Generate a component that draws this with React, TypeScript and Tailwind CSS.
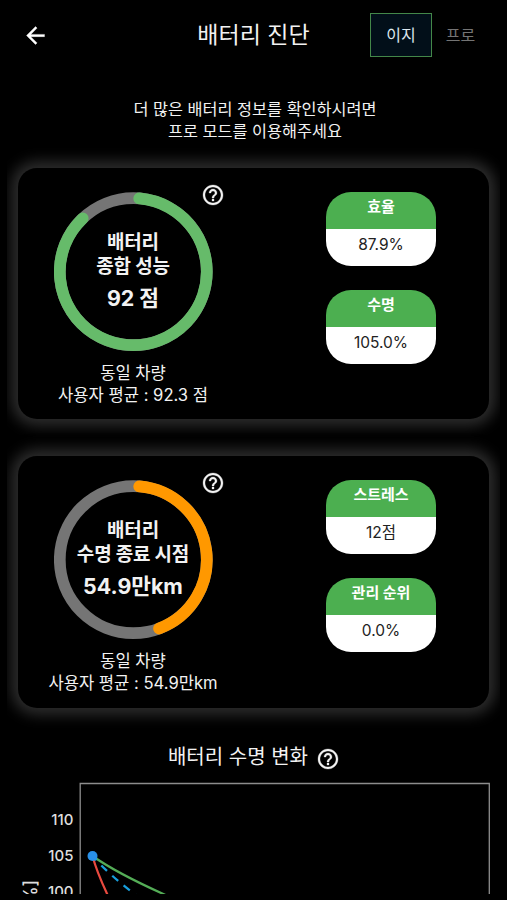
import React from 'react';

const FONT = "font-['Inter','Noto_Sans_CJK_KR',sans-serif]";

function HelpIcon() {
  return (
    <svg width="24" height="24" viewBox="0 0 24 24" className="block shrink-0 fill-[#f2f2f2] stroke-[#f2f2f2] stroke-[0.3]">
      <path d="M11 18h2v-2h-2v2zm1-16C6.48 2 2 6.48 2 12s4.48 10 10 10 10-4.48 10-10S17.52 2 12 2zm0 18c-4.41 0-8-3.59-8-8s3.59-8 8-8 8 3.59 8 8-3.59 8-8 8zm0-14c-2.21 0-4 1.79-4 4h2c0-1.1.9-2 2-2s2 .9 2 2c0 2-3 1.75-3 5h2c0-2.25 3-2.5 3-5 0-2.21-1.79-4-4-4z" />
    </svg>
  );
}

const RADIUS = 73.5;

function arcPath(from: number, to: number) {
  const point = (deg: number) => {
    const a = (deg * Math.PI) / 180;
    return `${79.3 + RADIUS * Math.sin(a)} ${79.7 - RADIUS * Math.cos(a)}`;
  };
  return `M${point(from)}A${RADIUS} ${RADIUS} 0 ${to - from > 180 ? 1 : 0} 1 ${point(to)}`;
}

interface GaugeProps {
  color: string;
  end: number;
  title: string;
  value: string;
}

function Gauge({ color, end, title, value }: GaugeProps) {
  return (
    <div className="grid h-40 w-40 place-items-center">
      <svg width="160" height="160" viewBox="0 0 160 160" className="col-start-1 row-start-1 fill-none">
        <circle cx="79.3" cy="79.7" r={RADIUS} stroke="#757575" strokeWidth="11.7" />
        <path d={arcPath(4.6, end)} stroke={color} strokeWidth="11.7" strokeLinecap="round" />
      </svg>
      <div className="col-start-1 row-start-1 mr-0.5 flex flex-col items-center whitespace-nowrap font-bold">
        <span className="text-[19px] leading-6 tracking-[-0.2px]">배터리</span>
        <span className="text-[19px] leading-6 tracking-[-0.2px]">{title}</span>
        <span className="mt-[3px] text-[21.4px] leading-8">{value}</span>
      </div>
    </div>
  );
}

function Pill({ label, value }: { label: string; value: string }) {
  return (
    <div className="flex h-[74px] w-[110px] flex-col overflow-hidden rounded-[25px] text-center">
      <div className="h-[37px] bg-[#4caf50] pt-[3px] text-[15px] leading-6 font-bold text-white">{label}</div>
      <div className="flex-1 bg-white pt-1 text-[15.5px] leading-6 text-[#222]">{value}</div>
    </div>
  );
}

interface CardProps extends GaugeProps {
  average: string;
  pills: [string, string][];
}

function Card({ average, pills, ...gauge }: CardProps) {
  return (
    <section className="relative flex h-[251.3px] rounded-[19px] bg-black pt-6 shadow-[0_0_14px_7px_#2c2c2c]">
      <div className="flex w-[232px] flex-col items-center">
        <Gauge {...gauge} />
        <p className="mt-[10px] mr-0.5 text-center text-[16.6px] leading-[22px] whitespace-nowrap">
          동일 차량
          <br />
          사용자 평균 : {average}
        </p>
      </div>
      <div className="-mt-[9px] -ml-[49px]">
        <HelpIcon />
      </div>
      <div className="ml-[101px] flex flex-col gap-6">
        {pills.map(([label, value]) => (
          <Pill key={label} label={label} value={value} />
        ))}
      </div>
    </section>
  );
}

function LifeChart() {
  return (
    <svg width="507" height="116" viewBox="0 778 507 116" className="mt-[5px] block fill-none">
      <path d="M80.2 900V783.5H489.3V900" stroke="#8d8d8d" strokeWidth="1.3" />
      <g className="fill-[#dedede] text-[15px] font-medium" textAnchor="end">
        <text x="73.5" y="824.5">110</text>
        <text x="73.5" y="861">105</text>
        <text x="73.5" y="897">100</text>
      </g>
      <text transform="translate(37 911) rotate(-90)" className="fill-[#dedede] text-[18px] font-medium">[%]</text>
      <path d="M92.5 856Q97 873 110 900" stroke="#e94a3f" strokeWidth="2.2" />
      <path d="M92.5 856Q118 874 170 897" stroke="#54ad57" strokeWidth="2.2" />
      <path d="M92.5 856Q110 876 141 899" stroke="#189fdd" strokeWidth="2.3" strokeDasharray="8 7" strokeDashoffset="2" />
      <circle cx="92.5" cy="856" r="5" fill="#2990e8" />
    </svg>
  );
}

export default function App() {
  return (
    <main className={`${FONT} flex h-[900px] w-[507px] flex-col overflow-hidden bg-black text-[#f2f2f2]`}>
      <header className="grid h-[70px] shrink-0 grid-cols-[1fr_auto_1fr] items-center">
        <svg width="27" height="27" viewBox="0 0 24 24" className="ml-[22px] fill-white stroke-white stroke-[0.3]">
          <path d="M20 11H7.83l5.59-5.59L12 4l-8 8 8 8 1.41-1.41L7.83 13H20v-2z" />
        </svg>
        <h1 className="text-[23px] leading-8">배터리 진단</h1>
        <nav className="flex justify-end pr-[18px] text-[16px]">
          <span className="grid h-11 w-[62px] place-items-center border-[1.5px] border-[#438749] bg-[#020f19] pb-px text-[#dce8ef]">이지</span>
          <span className="grid h-11 w-[57px] place-items-center pb-px text-[#747474]">프로</span>
        </nav>
      </header>
      <div className="h-[824px] shrink-0 overflow-hidden">
        <p className="pt-7 pl-[3px] text-center text-[16.3px] leading-[22px]">
          더 많은 배터리 정보를 확인하시려면
          <br />
          프로 모드를 이용해주세요
        </p>
        <div className="mx-[7px] mt-[26px] flex flex-col gap-[37px] overflow-x-clip px-[11px]">
          <Card
            color="#66bb6a"
            end={316.5}
            title="종합 성능"
            value="92 점"
            average="92.3 점"
            pills={[['효율', '87.9%'], ['수명', '105.0%']]}
          />
          <Card
            color="#ff9800"
            end={159.5}
            title="수명 종료 시점"
            value="54.9만km"
            average="54.9만km"
            pills={[['스트레스', '12점'], ['관리 순위', '0.0%']]}
          />
        </div>
        <div className="mt-[33.4px] flex h-8 items-center justify-center gap-2 pl-px">
          <h2 className="text-[20px] leading-8">배터리 수명 변화</h2>
          <div className="mt-1">
            <HelpIcon />
          </div>
        </div>
        <LifeChart />
      </div>
    </main>
  );
}
